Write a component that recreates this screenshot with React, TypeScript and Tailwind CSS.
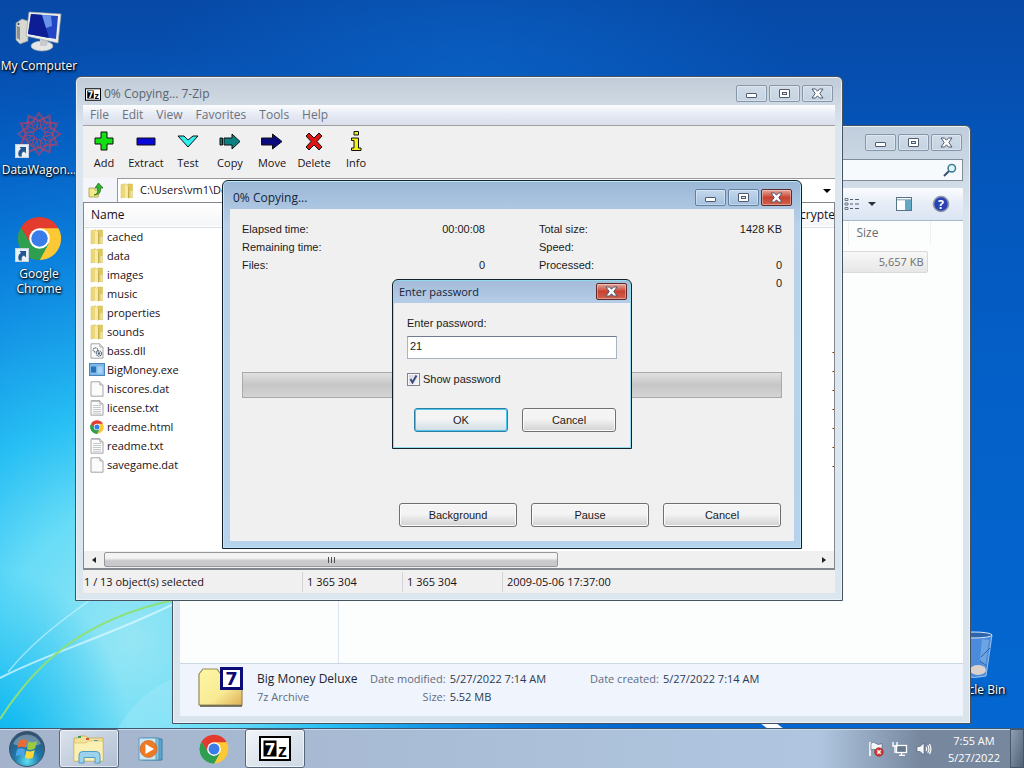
import { useState, type ReactNode } from 'react';

type FileKind = 'folder' | 'dll' | 'exe' | 'dat' | 'txt' | 'html';

const FILES: { name: string; kind: FileKind }[] = [
  { name: 'cached', kind: 'folder' },
  { name: 'data', kind: 'folder' },
  { name: 'images', kind: 'folder' },
  { name: 'music', kind: 'folder' },
  { name: 'properties', kind: 'folder' },
  { name: 'sounds', kind: 'folder' },
  { name: 'bass.dll', kind: 'dll' },
  { name: 'BigMoney.exe', kind: 'exe' },
  { name: 'hiscores.dat', kind: 'dat' },
  { name: 'license.txt', kind: 'txt' },
  { name: 'readme.html', kind: 'html' },
  { name: 'readme.txt', kind: 'txt' },
  { name: 'savegame.dat', kind: 'dat' },
];

const MENUS = ['File', 'Edit', 'View', 'Favorites', 'Tools', 'Help'];

function ChromeLogo({ className }: { className: string }) {
  return (
    <svg viewBox="0 0 48 48" className={className} aria-hidden="true">
      <path d="M24 24 L4.1 12.5 A23 23 0 0 1 43.9 12.5 Z" fill="#e33b2e" />
      <path d="M24 13 H44.2 A23 23 0 0 1 24 47 L33.5 29.5 Z" fill="#fcc934" />
      <path d="M14.5 29.5 L4.1 12.5 A23 23 0 0 0 24 47 L33.5 29.5 Z" fill="#2f9e4f" />
      <path d="M4.1 12.5 L14.5 29.5 L24 24 V13 Z" fill="#e33b2e" />
      <path d="M4.1 12.5 L13.8 28 A11 11 0 0 0 33.8 29 L24 47 A23 23 0 0 1 4.1 12.5 Z" fill="#2f9e4f" />
      <circle cx="24" cy="24" r="11" fill="#fff" />
      <circle cx="24" cy="24" r="8.8" fill="#3b7de8" />
    </svg>
  );
}

function SevenZipLogo({ className }: { className: string }) {
  return (
    <svg viewBox="0 0 32 25" className={className} aria-hidden="true">
      <rect x="1" y="1" width="30" height="23" fill="#fff" stroke="#000" strokeWidth="2" />
      <rect x="4.500" y="4.500" width="13" height="16" fill="#000" />
      <text x="5.500" y="18.500" fontSize="16" fontWeight="700" fontFamily="DejaVu Sans" fill="#fff">7</text>
      <text x="19" y="20.500" fontSize="18" fontWeight="700" fontFamily="Liberation Sans" fill="#000">z</text>
    </svg>
  );
}

function Folder({ className }: { className: string }) {
  return (
    <svg viewBox="0 0 14 16" className={className} aria-hidden="true">
      <path d="M1 1.500 L6 .8 V14 L1 15 Z" fill="#ecd878" stroke="#d9c160" strokeWidth=".5" />
      <path d="M6 2.500 L8 1 H12.500 V14.500 H6 Z" fill="#dfc75c" stroke="#d3ba55" strokeWidth=".5" />
      <path d="M5 1.500 L8.500 3 V15.500 L5 14.500 Z" fill="#f6eba2" />
      <path d="M8.500 3.500 V15.300" stroke="#bfa340" strokeWidth=".8" />
      <path d="M10.500 8 h2 v6 h-2 z" fill="#e9e6b4" />
    </svg>
  );
}

function FileIcon({ kind }: { kind: FileKind }) {
  if (kind === 'folder') return <Folder className="h-4 w-[14px]" />;
  if (kind === 'html') return <ChromeLogo className="size-[14px]" />;
  if (kind === 'exe') {
    return (
      <svg viewBox="0 0 16 14" className="h-[14px] w-4" aria-hidden="true">
        <rect x=".5" y=".5" width="15" height="12" fill="#7db9e8" stroke="#4a86bd" />
        <rect x="2" y="3.500" width="5" height="6" fill="#2a72b8" />
        <rect x="8.500" y="3.500" width="5" height="7" fill="#a8d4f3" />
      </svg>
    );
  }
  return (
    <svg viewBox="0 0 14 16" className="h-4 w-[14px]" aria-hidden="true">
      <path d="M1 .8 H9.800 L13 4 V15.200 H1 Z" fill="#fbfbfb" stroke="#9a9a9a" strokeWidth=".9" />
      <path d="M9.800 .8 V4 H13" fill="#e4e4e4" stroke="#9a9a9a" strokeWidth=".7" />
      {kind === 'txt' && (
        <>
          <path d="M3 5.500 H11 M3 7.500 H11 M3 9.500 H11 M3 11.500 H11 M3 13.300 H11" stroke="#b6bcc2" strokeWidth=".8" />
          <path d="M3 0 V2 M5 0 V2 M7 0 V2 M9 0 V2" stroke="#8d8d8d" strokeWidth=".7" />
        </>
      )}
      {kind === 'dll' && (
        <g fill="#fff" stroke="#4d6276" strokeWidth="1.200">
          <circle cx="5.500" cy="7" r="2.200" strokeDasharray="1.200 .6" />
          <circle cx="9" cy="10.500" r="2.600" strokeDasharray="1.200 .6" />
          <circle cx="9" cy="10.500" r=".7" />
        </g>
      )}
    </svg>
  );
}

function ShortcutArrow() {
  return (
    <svg viewBox="0 0 14 14" className="absolute bottom-0 left-0 size-[14px]" aria-hidden="true">
      <rect x=".5" y=".5" width="13" height="13" fill="#e9f1f8" stroke="#c7d4e0" />
      <path d="M4 12.500 C2.500 9 3.500 6.500 6 5 L4.500 3 H11 V9.500 L9 7.500 C7 8.500 6 10 7 12.500 Z" fill="#23588f" />
    </svg>
  );
}

function Wallpaper() {
  return (
    <svg viewBox="0 0 1024 768" preserveAspectRatio="none" className="absolute inset-0 size-full" aria-hidden="true">
      <defs>
        <linearGradient id="sky" x1="0" y1="0" x2="0" y2="1">
          <stop offset="0" stopColor="#0749a6" />
          <stop offset=".2" stopColor="#0455ba" />
          <stop offset=".5" stopColor="#0460c8" />
          <stop offset="1" stopColor="#0468d2" />
        </linearGradient>
        <radialGradient id="glow" gradientUnits="userSpaceOnUse" cx="0" cy="0" r="1" gradientTransform="translate(130 640) scale(560 600)">
          <stop offset="0" stopColor="#96e6f4" />
          <stop offset=".22" stopColor="#68dcf7" />
          <stop offset=".38" stopColor="#27bff4" />
          <stop offset=".66" stopColor="#0b86e2" stopOpacity=".85" />
          <stop offset="1" stopColor="#0562c8" stopOpacity="0" />
        </radialGradient>
        <radialGradient id="corner" gradientUnits="userSpaceOnUse" cx="0" cy="0" r="1" gradientTransform="translate(0 750) scale(130 180)">
          <stop offset="0" stopColor="#08b6f0" />
          <stop offset="1" stopColor="#08b6f0" stopOpacity="0" />
        </radialGradient>
        <radialGradient id="top" gradientUnits="userSpaceOnUse" cx="0" cy="0" r="1" gradientTransform="translate(470 80) scale(330 150)">
          <stop offset="0" stopColor="#0a63c6" stopOpacity=".8" />
          <stop offset="1" stopColor="#0a63c6" stopOpacity="0" />
        </radialGradient>
      </defs>
      <rect width="1024" height="768" fill="url(#sky)" />
      <rect width="1024" height="768" fill="url(#top)" />
      <rect width="1024" height="768" fill="url(#glow)" />
      <rect width="1024" height="768" fill="url(#corner)" />
      <path d="M118 728 C135 700 155 685 180 676 V728 Z" fill="#bdf1fa" opacity=".25" />
      <path d="M0 678 C50 652 100 640 178 602" fill="none" stroke="#d8f8ff" strokeWidth="2" opacity=".75" />
      <path d="M8 672 C30 645 55 625 90 600" fill="none" stroke="#d8f8ff" strokeWidth="1.500" opacity=".6" />
      <path d="M0 719 C35 665 80 620 174 600" fill="none" stroke="#8ee07a" strokeWidth="2" />
      <path d="M760 723 h16 l8 6 h-16 z" fill="#fff" />
    </svg>
  );
}

function WindowButton({ kind, danger = false, strong = false }: { kind: 'Minimize' | 'Maximize' | 'Close'; danger?: boolean; strong?: boolean }) {
  const look = danger
    ? 'border-[#5a2a2c] bg-linear-to-b from-[#e3a69b] via-[#c9402f] to-[#d0624d]'
    : strong
      ? 'border-[#62809f] bg-linear-to-b from-[#c3d7ec] to-[#a4c0de]'
      : 'border-[#8795a8] bg-linear-to-b from-[#d0dbe7] to-[#c5d3e2]';
  return (
    <button
      type="button"
      aria-label={kind}
      className={`flex h-[17px] w-[31px] items-center justify-center rounded-[2px] border shadow-[inset_0_0_0_1px_rgba(255,255,255,0.35)] ${look}`}
    >
      <svg viewBox="0 0 13 11" className="h-[11px] w-[13px]" aria-hidden="true">
        {kind === 'Minimize' && <rect x="1.500" y="5.500" width="10" height="4" rx=".5" fill="#fff" stroke="#4f5a70" />}
        {kind === 'Maximize' && (
          <>
            <rect x="1.500" y="1.500" width="10" height="8" rx=".5" fill="#fff" stroke="#4f5a70" />
            <rect x="4.500" y="4.500" width="4" height="2" fill="#dfe7f0" stroke="#4f5a70" />
          </>
        )}
        {kind === 'Close' && (
          <path
            d="M1 1 H4.500 L6.500 3.200 L8.500 1 H12 L8.800 5.500 L12 10 H8.500 L6.500 7.800 L4.500 10 H1 L4.200 5.500 Z"
            fill="#fff"
            stroke="#4f5a70"
            strokeWidth="1"
          />
        )}
      </svg>
    </button>
  );
}

function PushButton({ children, primary = false }: { children: ReactNode; primary?: boolean }) {
  return (
    <button
      type="button"
      className={`h-6 flex-1 rounded-[3px] border bg-linear-to-b from-[#f4f4f4] from-45% leading-4 ${
        primary
          ? 'border-[#2d7fa5] to-[#cfdde4] shadow-[inset_0_0_0_1px_#4cc8ee]'
          : 'border-[#707070] to-[#d2d2d2] shadow-[inset_0_0_0_1px_#fbfbfb]'
      }`}
    >
      {children}
    </button>
  );
}

function DesktopIcon({ label, className, children }: { label: string; className: string; children: ReactNode }) {
  return (
    <a
      href="#"
      className={`absolute flex w-[78px] flex-col items-center text-center text-[12px] leading-[15px] text-white [text-shadow:1px_1px_2px_#000,0_1px_3px_#000] ${className}`}
    >
      <span className="relative mb-1 flex h-12 w-12 items-center justify-center">{children}</span>
      {label}
    </a>
  );
}

function DesktopIcons() {
  return (
    <>
      <DesktopIcon label="My Computer" className="left-0 top-[6px]">
        <svg viewBox="0 0 48 48" className="size-12" aria-hidden="true">
          <path d="M1 17 L7 13 L13 15 V35 L5 38 L1 34 Z" fill="#d8d8d2" stroke="#8d9299" strokeWidth=".7" />
          <path d="M2 20 L5 21 V34 L2 32 Z" fill="#8b8f94" />
          <circle cx="3.500" cy="18" r="1" fill="#1d3b63" />
          <ellipse cx="27" cy="40" rx="11" ry="5" fill="#e5e6e6" stroke="#a5abb1" strokeWidth=".7" />
          <path d="M25 33 H33 L32 40 H25 Z" fill="#c7cbcf" />
          <path d="M14 6 L46 8 L43 37 L11 30 Z" fill="#eceee9" stroke="#a2a8ad" strokeWidth=".7" />
          <path d="M16 8 L43 10 L41 33 L13 28 Z" fill="#2246c4" />
          <path d="M16 8 L27 9 L34 32 L13 28 Z" fill="#0d1d94" />
          <path d="M27 9 L36 9.500 L37 20 L31 22 Z" fill="#7ba6f2" opacity=".8" />
        </svg>
      </DesktopIcon>
      <DesktopIcon label="DataWagon..." className="left-0 top-[110px]">
        <svg viewBox="-24 -24 48 48" className="size-12" fill="none" stroke="#c8405a" strokeWidth="1" aria-hidden="true">
          {[0, 30, 60, 90, 120, 150, 180, 210, 240, 270, 300, 330].map((deg) => (
            <g key={deg} transform={`rotate(${deg})`}>
              <path d="M0 -5 L6 -12 L0 -20 L-6 -12 Z" opacity=".75" />
              <path d="M-9 -9 L0 -22 L9 -9" opacity=".6" />
            </g>
          ))}
        </svg>
        <ShortcutArrow />
      </DesktopIcon>
      <DesktopIcon label="Google Chrome" className="left-0 top-[214px]">
        <ChromeLogo className="size-[45px]" />
        <ShortcutArrow />
      </DesktopIcon>
      <DesktopIcon label="Recycle Bin" className="left-[935px] top-[630px]">
        <svg viewBox="0 0 48 48" className="size-12" aria-hidden="true">
          <path d="M7 5 L42 5 L36 46 Q24 49 13 46 Z" fill="#4a8bdc" stroke="#a9caec" strokeWidth=".9" />
          <ellipse cx="24" cy="5" rx="18" ry="3" fill="#2e66ad" stroke="#d4e7f7" strokeWidth="1" />
          <path d="M32 9 L39 10 L35 37 L30 30 Z" fill="#86b6ea" opacity=".6" />
          <path d="M40 18 L31 27 M30 31 L37 36" stroke="#2f5fa5" strokeWidth="1" fill="none" />
          <ellipse cx="28" cy="40" rx="8" ry="5" fill="#d9d2cc" />
        </svg>
      </DesktopIcon>
    </>
  );
}

function ExplorerWindow() {
  return (
    <section
      aria-label="Explorer"
      className="absolute left-[172px] top-[125px] flex h-[599px] w-[799px] flex-col rounded-t-md border border-[#46525f] bg-[#d8e3ed] bg-linear-to-b from-[#c0cedd] to-[#dae4ed] to-15% px-[7px] pb-[7px] shadow-[inset_0_0_0_1px_#eaf2f8]"
    >
      <div className="flex h-[33px] justify-end gap-[2px] pr-px pt-2">
        <WindowButton kind="Minimize" />
        <WindowButton kind="Maximize" />
        <WindowButton kind="Close" />
      </div>
      <div className="flex h-[29px] justify-end">
        <label className="flex h-[22px] w-60 items-center border border-[#7f8d9b] bg-[#f7fafd] pr-[5px]">
          <input type="search" aria-label="Search" className="min-w-0 flex-1 bg-transparent outline-none" />
          <svg viewBox="0 0 14 14" className="size-[14px]" fill="none" aria-hidden="true">
            <path d="M1 13 L6 8" stroke="#37506b" strokeWidth="2" />
            <circle cx="8.800" cy="5.200" r="3.700" fill="#e5f6fa" stroke="#3e8494" strokeWidth="1.600" />
          </svg>
        </label>
      </div>
      <div className="flex h-[33px] items-center justify-end gap-5 border-b border-[#a9b8ca] bg-linear-to-b from-[#fbfcfe] via-[#e6edf7] to-[#dbe5f2] pr-[13px]">
        <button type="button" aria-label="Change your view" className="flex items-center gap-2">
          <svg viewBox="0 0 22 14" className="h-[14px] w-[22px]" fill="none" stroke="#516070" aria-hidden="true">
            <path d="M1 1.500 h3 v2 h-3z M1 6 h3 v2 h-3z M1 10.500 h3 v2 h-3z M7 1.500 h3 v2 h-3z M7 6 h3 v2 h-3z M7 10.500 h3 v2 h-3z" strokeWidth=".8" />
            <path d="M12 2.500 h3 M17 2.500 h4 M12 7 h3 M17 7 h4 M12 11.500 h3 M17 11.500 h4" />
          </svg>
          <svg viewBox="0 0 8 4" className="h-1 w-2" aria-hidden="true"><path d="M0 0 H8 L4 4 Z" fill="#28323c" /></svg>
        </button>
        <button type="button" aria-label="Show the preview pane">
          <svg viewBox="0 0 16 14" className="h-[14px] w-4" aria-hidden="true">
            <rect x=".5" y=".5" width="15" height="13" fill="#fff" stroke="#587389" />
            <rect x="10" y="3" width="5" height="10" fill="#62a9c4" />
            <path d="M1 2.800 H15 M9.500 3 V13" stroke="#7ba0b4" />
          </svg>
        </button>
        <button type="button" aria-label="Get help">
          <svg viewBox="0 0 18 18" className="size-[18px]" aria-hidden="true">
            <circle cx="9" cy="9" r="7.500" fill="#2a41b5" stroke="#8e96a8" strokeWidth="1.600" />
            <text x="9" y="13.500" textAnchor="middle" fontSize="12.500" fontWeight="700" fontFamily="Open Sans" fill="#fff">?</text>
          </svg>
        </button>
      </div>
      <div className="flex flex-1 bg-[#fcfdfd]">
        <div className="w-[159px] border-r border-[#dce4ee]" />
        <div className="flex-1">
          <table className="ml-auto mr-8 w-[360px] text-[12px] text-[#6d6d6d]">
            <thead>
              <tr className="h-6">
                <th className="w-[277px]" />
                <th className="border-x border-[#eef0f2] px-2 text-left font-normal">Size</th>
              </tr>
            </thead>
            <tbody>
              <tr>
                <td colSpan={2} className="pr-[3px] pt-[6px]">
                  <div className="flex h-[22px] items-center justify-end rounded-[2px] border border-[#d9d9d9] bg-linear-to-b from-[#f8f8f8] to-[#e7e7e7] pr-[3px] text-[11px]">5,657 KB</div>
                </td>
              </tr>
            </tbody>
          </table>
        </div>
      </div>
      <footer className="flex h-[53px] items-start border-t border-[#ccd7e3] bg-[#f0f4fc] pl-[17px] pt-[2px] text-[11px] leading-[18px] text-[#5f6d80]">
        <svg viewBox="0 0 48 42" className="h-[42px] w-12" aria-hidden="true">
          <defs>
            <linearGradient id="archive" x1="0" y1="0" x2="1" y2="1">
              <stop offset="0" stopColor="#fdf7a4" />
              <stop offset=".6" stopColor="#f9ea95" />
              <stop offset="1" stopColor="#dfae57" />
            </linearGradient>
          </defs>
          <path d="M2 8 L6 3 H20 L23 7 H45 V39 H2 Z" fill="url(#archive)" stroke="#958a55" strokeWidth="1.200" />
          <path d="M3 40 H45" stroke="#54503a" strokeWidth="1.500" />
          <rect x="24.500" y="2.500" width="20" height="20" fill="#fff" stroke="#0c0c78" strokeWidth="3" />
          <text x="34.500" y="19" textAnchor="middle" fontSize="18" fontWeight="700" fontFamily="DejaVu Sans" fill="#0c0c78">7</text>
        </svg>
        <div className="ml-3 w-[113px] whitespace-nowrap pt-1">
          <p className="text-[12px] text-[#1b2532]">Big Money Deluxe</p>
          <p>7z Archive</p>
        </div>
        <dl className="grid grid-cols-[auto_auto] gap-x-1 whitespace-nowrap pt-1">
          <dt className="text-right">Date modified:</dt>
          <dd className="text-[#2c3b50]">5/27/2022 7:14 AM</dd>
          <dt className="text-right">Size:</dt>
          <dd className="text-[#2c3b50]">5.52 MB</dd>
        </dl>
        <dl className="ml-11 flex gap-1 whitespace-nowrap pt-1">
          <dt>Date created:</dt>
          <dd className="text-[#2c3b50]">5/27/2022 7:14 AM</dd>
        </dl>
      </footer>
    </section>
  );
}

const TOOLS: { label: string; art: ReactNode }[] = [
  { label: 'Add', art: <path d="M9 2 h6 v6 h6 v6 h-6 v6 h-6 v-6 h-6 v-6 h6 z" fill="#12e012" /> },
  { label: 'Extract', art: <path d="M3 8 h18 v7 h-18 z" fill="#0808d8" /> },
  { label: 'Test', art: <path d="M2 6 h6 l4 4 l5 -4 h5 l-10 11 z" fill="#2ff0f0" /> },
  { label: 'Copy', art: <path d="M2 8 h2.500 v7 h-2.500 z M6 8 h8 v-4 l8 7.500 l-8 7.500 v-4 h-8 z" fill="#0c8080" /> },
  { label: 'Move', art: <path d="M1.500 8 h11 v-4 l9.500 7.500 l-9.500 7.500 v-4 h-11 z" fill="#0a0a80" /> },
  { label: 'Delete', art: <path d="M4 6 l3 -3 l5 5 l5 -5 l3 3 l-5 5.500 l5 5.500 l-3 3 l-5 -5 l-5 5 l-3 -3 l5 -5.500 z" fill="#dc1414" /> },
  { label: 'Info', art: <path d="M10 1.500 h4.500 v3.500 h-4.500 z M7.500 8 h7 v10 h2.500 v2.500 h-9.500 v-2.500 h2.500 v-7.500 h-2.500 z" fill="#f0f01c" /> },
];

function SevenZipWindow() {
  return (
    <section
      aria-label="7-Zip"
      className="absolute left-[75px] top-[76px] flex h-[525px] w-[768px] flex-col rounded-t-md border border-[#46525f] bg-linear-to-b from-[#c1ccd8] to-[#dbe6ef] to-10% px-[7px] pb-[7px] text-[11px] shadow-[inset_0_0_0_1px_#e9f1f8]"
    >
      <header className="flex h-[28px] items-start gap-[2px] pr-[2px] pt-2">
        <h2 className="flex flex-1 items-center gap-[3px] pl-[2px] text-[12px] leading-[18px] text-[#59636e]">
          <SevenZipLogo className="h-[13px] w-4" />
          0% Copying... 7-Zip
        </h2>
        <WindowButton kind="Minimize" />
        <WindowButton kind="Maximize" />
        <WindowButton kind="Close" />
      </header>
      <nav className="flex h-5 items-center gap-[13px] bg-linear-to-b from-[#fcfdfe] via-[#e6eaf4] to-[#dadfec] pl-[7px] text-[12px] text-[#6c727c]">
        {MENUS.map((m) => (
          <button key={m} type="button">{m}</button>
        ))}
      </nav>
      <div className="flex h-[53px] items-start border-t border-[#a0a0a0] bg-[#f0f0f0] pt-1">
        {TOOLS.map((t) => (
          <button key={t.label} type="button" className="flex w-[42px] flex-col items-center">
            <svg viewBox="0 0 24 24" className="size-6" stroke="#111" strokeWidth="1" aria-hidden="true">{t.art}</svg>
            <span className="leading-[18px]">{t.label}</span>
          </button>
        ))}
      </div>
      <div className="flex h-6 bg-linear-to-r from-[#f4f6fb] to-[#dfe4f1]">
        <button type="button" aria-label="Up one level" className="flex w-[34px] items-center pl-[5px]">
          <svg viewBox="0 0 16 16" className="size-4" aria-hidden="true">
            <path d="M1 6 H6 L7 8 H12 L10 15 H1 Z" fill="#f4ea8a" stroke="#a99b3b" strokeWidth=".8" />
            <path d="M6 13 C10 12 10 9 9.500 6 H7 L10.500 1 L15 6 H12.500 C13 10 11 13 6 13 Z" fill="#2fb52f" stroke="#156615" strokeWidth=".7" />
          </svg>
        </button>
        <div className="flex flex-1 items-center border-l border-t border-[#999] bg-white pl-[2px]">
          <Folder className="h-[18px] w-[14px]" />
          <input
            aria-label="Path"
            defaultValue={'C:\\Users\\vm1\\Desktop\\'}
            className="ml-1 min-w-0 flex-1 bg-transparent pl-[2px] text-[11px] outline-none"
          />
          <button type="button" aria-label="Show path list" className="px-1">
            <svg viewBox="0 0 8 4" className="h-1 w-2" aria-hidden="true"><path d="M0 0 H8 L4 4 Z" fill="#000" /></svg>
          </button>
        </div>
      </div>
      <div className="flex min-h-0 flex-1 flex-col border border-b-2 border-[#828790] bg-white">
        <div className="min-h-0 flex-1 overflow-hidden">
          <table className="w-[780px] table-fixed text-left">
            <thead>
              <tr className="h-6 border-b border-[#dcdfe4] bg-linear-to-b from-white to-[#f5f6f8]">
                <th className="w-[696px] pl-[7px] text-[12px] font-normal">Name</th>
                <th className="pl-[6px] text-[12px] font-normal">Encrypted</th>
              </tr>
            </thead>
            <tbody>
              {FILES.map((f) => (
                <tr key={f.name} className="h-[19px]">
                  <td className="p-0">
                    <span className="flex h-[19px] items-center gap-[2px] pl-[5px]">
                      <span className="flex w-4 justify-center"><FileIcon kind={f.kind} /></span>
                      {f.name}
                    </span>
                  </td>
                  <td className="p-0 pl-[52px] leading-4">{f.kind === 'folder' ? '' : '-'}</td>
                </tr>
              ))}
            </tbody>
          </table>
        </div>
        <div className="flex h-[17px] items-center bg-[#f0f0f0]">
          <button type="button" aria-label="Scroll left" className="flex w-5 justify-center">
            <svg viewBox="0 0 4 6" className="h-[6px] w-1" aria-hidden="true"><path d="M4 0 V6 L0 3 Z" fill="#222" /></svg>
          </button>
          <div className="flex-1">
            <div className="flex h-[15px] w-[64%] items-center justify-center gap-[2px] rounded-[2px] border border-[#979797] bg-linear-to-b from-[#f3f3f3] from-40% to-[#c9c9cd] to-60%">
              <i className="h-[6px] w-px bg-[#4e4e4e]" />
              <i className="h-[6px] w-px bg-[#4e4e4e]" />
              <i className="h-[6px] w-px bg-[#4e4e4e]" />
            </div>
          </div>
          <button type="button" aria-label="Scroll right" className="flex w-5 justify-center">
            <svg viewBox="0 0 4 6" className="h-[6px] w-1" aria-hidden="true"><path d="M0 0 V6 L4 3 Z" fill="#222" /></svg>
          </button>
        </div>
      </div>
      <footer className="flex h-[23px] items-center bg-[#f1f0f0] leading-5">
        <span className="w-[220px] border-r border-[#d4d4d4] pl-px">1 / 13 object(s) selected</span>
        <span className="w-[100px] border-r border-[#d4d4d4] pl-1">1 365 304</span>
        <span className="w-[100px] border-r border-[#d4d4d4] pl-1">1 365 304</span>
        <span className="flex-1 pl-1">2009-05-06 17:37:00</span>
      </footer>
    </section>
  );
}

function Stat({ label, value = '' }: { label: string; value?: string }) {
  return (
    <div className="flex h-[18px] items-center justify-between">
      <dt>{label}</dt>
      <dd>{value}</dd>
    </div>
  );
}

function CopyDialog() {
  return (
    <section
      aria-label="0% Copying..."
      className="absolute left-[222px] top-[180px] flex h-[369px] w-[580px] flex-col rounded-t-md border border-[#10202c] bg-linear-to-b from-[#9ab7d6] via-[#b9d1ea] via-12% to-[#b5d3ec] px-[7px] pb-[7px] shadow-[inset_0_0_0_1px_#bfe6f7]"
    >
      <header className="flex h-7 items-start gap-[2px] pr-[2px] pt-2">
        <h2 className="flex-1 pl-[3px] text-[12px] leading-[18px] text-[#17233a]">0% Copying...</h2>
        <WindowButton kind="Minimize" strong />
        <WindowButton kind="Maximize" strong />
        <WindowButton kind="Close" danger />
      </header>
      <div className="flex flex-1 flex-col bg-[#f0f0f0] px-3 pb-[14px] pt-[11px] font-['Liberation_Sans',sans-serif] text-[11px] text-[#1b1b1b]">
        <div className="grid grid-cols-2 gap-x-[54px]">
          <dl>
            <Stat label="Elapsed time:" value="00:00:08" />
            <Stat label="Remaining time:" />
            <Stat label="Files:" value="0" />
          </dl>
          <dl>
            <Stat label="Total size:" value="1428 KB" />
            <Stat label="Speed:" />
            <Stat label="Processed:" value="0" />
            <Stat label="" value="0" />
          </dl>
        </div>
        <div
          role="progressbar"
          aria-label="Copy progress"
          aria-valuenow={0}
          className="mt-20 h-[26px] border border-[#a9a9a9] bg-linear-to-b from-[#e0e0e0] via-[#c6c6c6] to-[#d4d4d4]"
        />
        <div className="ml-auto mr-px mt-auto flex w-[382px] gap-[14px]">
          <PushButton>Background</PushButton>
          <PushButton>Pause</PushButton>
          <PushButton>Cancel</PushButton>
        </div>
      </div>
    </section>
  );
}

function PasswordDialog() {
  const [password, setPassword] = useState('21');
  const [show, setShow] = useState(true);

  return (
    <section
      aria-label="Enter password"
      className="absolute left-[392px] top-[279px] flex w-[240px] flex-col rounded-t-md border border-[#10202c] bg-linear-to-b from-[#a3bbd8] to-[#b7cfe9] to-15% p-px pt-0 shadow-[inset_0_0_0_1px_#8fdcec]"
    >
      <header className="flex h-[23px] items-start pr-[3px] pt-[3px]">
        <h2 className="flex-1 pl-[5px] text-[11px] leading-[18px] text-[#17233a]">Enter password</h2>
        <WindowButton kind="Close" danger />
      </header>
      <form
        onSubmit={(e) => e.preventDefault()}
        className="flex flex-col bg-[#f0f0f0] px-[13px] pb-[15px] pt-3 font-['Liberation_Sans',sans-serif] text-[11px] leading-4 text-[#1b1b1b]"
      >
        <label htmlFor="password">Enter password:</label>
        <input
          id="password"
          type={show ? 'text' : 'password'}
          value={password}
          onChange={(e) => setPassword(e.target.value)}
          className="mt-[5px] h-[23px] border border-[#a9b4c3] border-t-[#6f7d8f] bg-white px-[2px] pb-1 leading-4 outline-none"
        />
        <label className="mt-3 flex items-center gap-[3px]">
          <span className="relative flex size-[13px]">
            <input
              type="checkbox"
              checked={show}
              onChange={(e) => setShow(e.target.checked)}
              className="peer size-[13px] appearance-none border border-[#7d8590] bg-linear-to-br from-[#cfd5dc] to-[#f7f8f9] shadow-[inset_0_0_0_1px_#f6f6f6]"
            />
            <svg viewBox="0 0 13 13" className="pointer-events-none absolute inset-0 hidden size-[13px] peer-checked:block" aria-hidden="true">
              <path d="M3.500 6 L5.500 9.500 L9.500 2.500" fill="none" stroke="#3c4c84" strokeWidth="2" />
            </svg>
          </span>
          Show password
        </label>
        <div className="ml-auto mr-px mt-[21px] flex w-[202px] gap-[14px]">
          <PushButton primary>OK</PushButton>
          <PushButton>Cancel</PushButton>
        </div>
      </form>
    </section>
  );
}

function Taskbar() {
  const running = 'flex h-full w-[60px] items-center justify-center rounded-[3px] border border-[#56677b] bg-linear-to-br shadow-[inset_0_0_0_1px_rgba(255,255,255,0.6)]';
  return (
    <footer className="relative flex h-10 shrink-0 items-center border-t border-[#3d5873] bg-linear-to-r from-[#a3b3cb] via-[#b0c6e0] via-80% to-[#76879e] to-90% shadow-[inset_0_1px_0_#cbd9e8]">
      <button type="button" aria-label="Start" className="flex w-[59px] justify-center pr-[5px]">
        <svg viewBox="0 0 38 38" className="size-[38px]" aria-hidden="true">
          <defs>
            <radialGradient id="orb" cx=".5" cy=".85" r=".8">
              <stop offset="0" stopColor="#5fe0f0" />
              <stop offset=".45" stopColor="#1d78ac" />
              <stop offset="1" stopColor="#31526f" />
            </radialGradient>
          </defs>
          <circle cx="19" cy="19" r="17.500" fill="url(#orb)" stroke="#3c546c" />
          <path d="M5 14 A15 15 0 0 1 33 14 Q19 20 5 14 Z" fill="#fff" opacity=".3" />
          <path d="M11 11 Q15 8 19 10.500 L17.500 18 Q13.500 15.500 9.500 18 Z" fill="#ee6a35" />
          <path d="M20.500 11.500 Q24.500 13.500 29 11 L27 18.500 Q23 21 19 19 Z" fill="#9ccc3c" />
          <path d="M9 19.500 Q13 17 17 19.500 L15.500 26.500 Q11.500 24 7.500 26.500 Z" fill="#4aa5e8" />
          <path d="M18.500 20.500 Q22.500 22.500 26.700 20 L25 27.500 Q21 30 17 27.500 Z" fill="#fbd63c" />
        </svg>
      </button>
      <button type="button" aria-label="Windows Explorer" className={`${running} from-[#dbe3ec] to-[#b0bfd3]`}>
        <svg viewBox="0 0 34 30" className="h-[30px] w-[34px]" aria-hidden="true">
          <path d="M2 4 H6 L8 2 H14 L16 4 H31 V27 H2 Z" fill="#f3e29a" stroke="#c4a74e" strokeWidth=".8" />
          <path d="M6 2 h3 v2 h-3z" fill="#3f9a4f" />
          <path d="M14 4 h3 v2 h-3z" fill="#cf5040" />
          <path d="M22 6 h4 v2 h-4z" fill="#2f83c8" />
          <path d="M2 9 H14 L16 7 H31 V27 H2 Z" fill="#faf0b4" stroke="#d3bb66" strokeWidth=".6" />
          <path d="M7 29 V21 Q7 17.500 11 17.500 H24 Q28 17.500 28 21 V29 H23 V23.500 H12 V29 Z" fill="#9bd3ee" stroke="#4f9cc4" />
        </svg>
      </button>
      <button type="button" aria-label="Windows Media Player" className="flex w-[63px] justify-center">
        <svg viewBox="0 0 28 26" className="h-[26px] w-7" aria-hidden="true">
          <path d="M8 3 H25 V24 H8 Z" fill="#5aa7ce" stroke="#3d7ea8" />
          <path d="M5 2 H22 V24 H5 Z" fill="#8bc4de" stroke="#4c90b7" />
          <path d="M2 2 H19 V24 H2 Z" fill="#cde6f2" stroke="#5e9dbf" />
          <circle cx="11.500" cy="13" r="8.500" fill="#ee7a24" stroke="#c05d17" strokeWidth=".6" />
          <path d="M8.500 8 L17 13 L8.500 18 Z" fill="#fff" />
        </svg>
      </button>
      <button type="button" aria-label="Google Chrome" className="flex w-[63px] justify-center">
        <ChromeLogo className="size-[30px]" />
      </button>
      <button type="button" aria-label="7-Zip" className={`${running} from-[#f1f5f8] to-[#cdd8e4]`}>
        <SevenZipLogo className="h-[25px] w-8" />
      </button>
      <div className="ml-auto flex h-full items-center gap-2 text-white">
        <svg viewBox="0 0 16 16" className="size-4" aria-hidden="true">
          <path d="M2 1 V15" stroke="#fff" strokeWidth="1.600" />
          <path d="M3 2 Q6 .5 8 2.500 T14 2.500 V9 Q10 10.500 8 9 T3 9 Z" fill="#f5f7fa" stroke="#4b596b" strokeWidth=".6" />
          <circle cx="11" cy="11" r="4.300" fill="#d33a33" stroke="#8f2320" strokeWidth=".6" />
          <path d="M9.300 9.300 L12.700 12.700 M12.700 9.300 L9.300 12.700" stroke="#fff" strokeWidth="1.400" />
        </svg>
        <svg viewBox="0 0 16 16" className="size-4" fill="none" aria-hidden="true">
          <rect x="4.500" y="4.500" width="10" height="7" fill="#64788f" stroke="#fff" strokeWidth="1.300" />
          <path d="M7 14.300 H13 M9.500 12 V14" stroke="#fff" strokeWidth="1.300" />
          <path d="M1 1 V5 H5 V1 M3 5 V12" stroke="#fff" strokeWidth="1.400" />
        </svg>
        <svg viewBox="0 0 16 16" className="size-4" fill="none" stroke="#fff" strokeWidth="1.200" aria-hidden="true">
          <path d="M1 5.500 H4 L8 2 V14 L4 10.500 H1 Z" fill="#f5f7fa" stroke="#4b596b" strokeWidth=".6" />
          <path d="M10 6 Q11.300 8 10 10 M11.800 4.300 Q14 8 11.800 11.700 M13.500 3 Q16.300 8 13.500 13" />
        </svg>
        <time dateTime="2022-05-27T07:55" className="ml-2 mr-[2px] text-center text-[11px] leading-[17px]">
          7:55 AM
          <br />
          5/27/2022
        </time>
        <button type="button" aria-label="Show desktop" className="h-full w-[14px] border border-[#47566a] bg-linear-to-br from-[#8fa0b4] to-[#526276]" />
      </div>
    </footer>
  );
}

export default function App() {
  return (
    <div className="relative flex min-h-screen w-full flex-col overflow-hidden font-['Open_Sans',sans-serif] text-[#1a1016]">
      <Wallpaper />
      <main className="relative flex-1">
        <DesktopIcons />
        <ExplorerWindow />
        <SevenZipWindow />
        <CopyDialog />
        <PasswordDialog />
      </main>
      <Taskbar />
    </div>
  );
}
